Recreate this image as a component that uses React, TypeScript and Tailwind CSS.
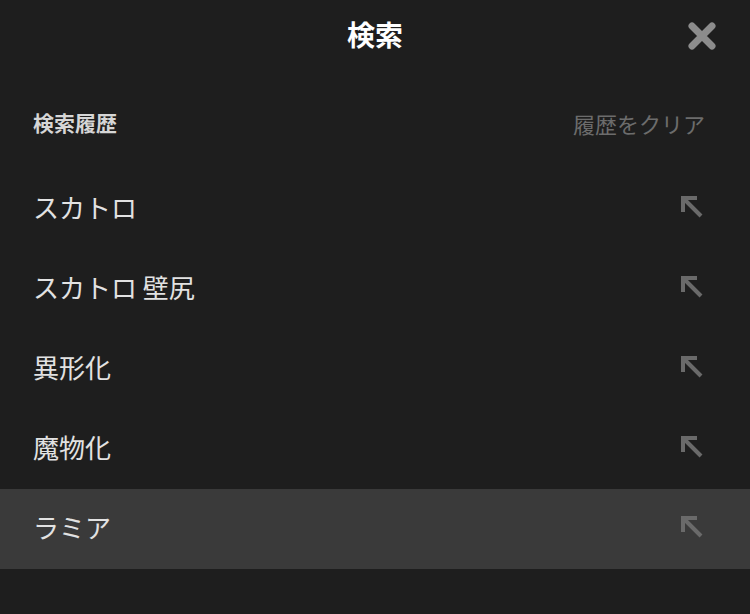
const history = ["スカトロ", "スカトロ 壁尻", "異形化", "魔物化", "ラミア"];

const ArrowIcon = () => (
  <svg width="24" height="24" viewBox="0 0 24 24" fill="none" stroke="#6a6a6a" strokeWidth="4">
    <path d="M3 17V3h14" strokeLinejoin="miter" />
    <path d="M3.5 3.5L21 21" />
  </svg>
);

const App = () => {
  return (
    <div
      className="w-[750px] h-[614px] bg-[#1e1e1e] text-[#e2e2e2] overflow-hidden"
      style={{ fontFamily: '"Noto Sans CJK JP", "Noto Sans", sans-serif' }}
    >
      {/* Header */}
      <div className="relative h-[72px] flex items-center justify-center">
        <h1 className="text-[28px] font-bold text-white leading-none pb-[4px]">検索</h1>
        <button className="absolute right-[33px] top-[21px] w-[30px] h-[30px] flex items-center justify-center">
          <svg width="30" height="30" viewBox="0 0 30 30" stroke="#8c8c8c" strokeWidth="7" strokeLinecap="round">
            <path d="M5 5l20 20M25 5L5 25" />
          </svg>
        </button>
      </div>

      {/* Section header */}
      <div className="mt-[36px] mb-[27px] h-[34px] px-[33px] flex items-center justify-between">
        <span className="text-[21px] font-bold text-[#d6d6d6] pb-[4px]">検索履歴</span>
        <span className="text-[22px] text-[#6c6c6c] mr-[12px] pb-[4px]">履歴をクリア</span>
      </div>

      {/* History list */}
      <ul>
        {history.map((item, index) => (
          <li
            key={index}
            className={`h-[80px] pl-[33px] pr-[46px] flex items-center justify-between ${
              index === history.length - 1 ? "bg-[#3a3a3a]" : ""
            }`}
          >
            <span className="text-[26px] text-[#e2e2e2] leading-none pb-[4px]">{item}</span>
            <span className="pb-[4px]">
              <ArrowIcon />
            </span>
          </li>
        ))}
      </ul>
    </div>
  );
};

export default App;
